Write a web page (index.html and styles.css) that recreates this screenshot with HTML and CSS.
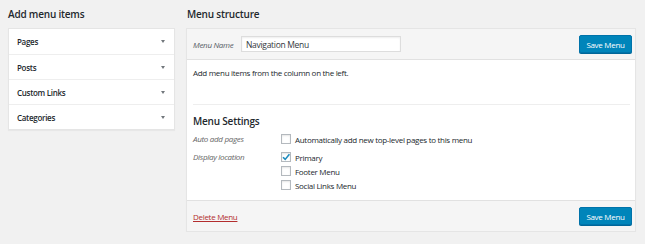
FILE: index.html
```html
<!doctype html>
<html lang="en">
<head>
    <meta charset="utf-8">
    <title>Menus</title>
    <link rel="stylesheet" href="styles.css">
</head>
<body>
    <div class="page">
        <div class="col-left">
            <h2>Add menu items</h2>
            <div class="accordion">
                <div class="acc-item"><span>Pages</span><span class="arrow"></span></div>
                <div class="acc-item"><span>Posts</span><span class="arrow"></span></div>
                <div class="acc-item"><span>Custom Links</span><span class="arrow"></span></div>
                <div class="acc-item"><span>Categories</span><span class="arrow"></span></div>
            </div>
        </div>
        <div class="col-right">
            <h2>Menu structure</h2>
            <div class="menu-box">
                <div class="menu-header">
                    <label class="name-label" for="menu_name">Menu Name</label>
                    <input type="text" id="menu_name" class="name-input" value="Navigation Menu">
                    <button type="button" class="save-button">Save Menu</button>
                </div>
                <div class="menu-body">
                    <p class="hint">Add menu items from the column on the left.</p>
                    <div class="settings">
                        <h3>Menu Settings</h3>
                        <div class="setting-row">
                            <div class="setting-label">Auto add pages</div>
                            <div class="setting-options">
                                <div class="option"><span class="check"></span>Automatically add new top-level pages to this menu</div>
                            </div>
                        </div>
                        <div class="setting-row">
                            <div class="setting-label">Display location</div>
                            <div class="setting-options">
                                <div class="option"><span class="check checked"><svg viewBox="0 0 10 10" width="10" height="10"><path d="M2 5.2 L4.2 7.4 L8.4 2.2" fill="none" stroke="#1e8cbe" stroke-width="1.6"/></svg></span>Primary</div>
                                <div class="option"><span class="check"></span>Footer Menu</div>
                                <div class="option"><span class="check"></span>Social Links Menu</div>
                            </div>
                        </div>
                    </div>
                </div>
                <div class="menu-footer">
                    <a href="#" class="delete-link">Delete Menu</a>
                    <button type="button" class="save-button">Save Menu</button>
                </div>
            </div>
        </div>
    </div>
</body>
</html>
```

FILE: styles.css
```css
body {
    margin: 0;
    background-color: #f1f1f1;
    font-family: "Open Sans", "Noto Sans", sans-serif;
    font-size: 8px;
    letter-spacing: -0.3px;
    color: #23282d;
}
.page {
    display: flex;
    gap: 11px;
    padding: 0 9px 0 8px;
}
.col-left {
    width: 167px;
    flex-shrink: 0;
}
.col-right {
    flex-grow: 1;
}
h2 {
    margin: 0;
    height: 28px;
    line-height: 28px;
    font-size: 10px;
    font-weight: 600;
    letter-spacing: -0.2px;
}
.col-right h2 {
    padding-left: 1px;
}
.accordion {
    background-color: #fff;
    border: 1px solid #e5e5e5;
    box-shadow: 0 1px 1px rgba(0, 0, 0, 0.04);
}
.acc-item {
    height: 25px;
    box-sizing: border-box;
    display: flex;
    align-items: center;
    justify-content: space-between;
    padding: 0 8px 0 8px;
    font-weight: 600;
    border-top: 1px solid #eee;
}
.acc-item:first-child {
    border-top: none;
}
.arrow {
    width: 0;
    height: 0;
    border-left: 2.5px solid transparent;
    border-right: 2.5px solid transparent;
    border-top: 3px solid #72777c;
    margin-right: 1px;
}
.menu-box {
    border: 1px solid #e5e5e5;
    background-color: #fff;
    box-shadow: 0 1px 1px rgba(0, 0, 0, 0.04);
}
.menu-header {
    height: 30px;
    display: flex;
    align-items: center;
    padding: 0 3px 0 6px;
    background-color: #f5f5f5;
    border-bottom: 1px solid #e1e1e1;
}
.name-label {
    font-style: italic;
    color: #555d66;
    width: 41px;
    margin-right: 7px;
}
.name-input {
    width: 160px;
    height: 16px;
    box-sizing: border-box;
    border: 1px solid #ddd;
    box-shadow: inset 0 1px 2px rgba(0, 0, 0, 0.07);
    padding: 0 4px;
    font-family: inherit;
    font-size: 8.5px;
    letter-spacing: -0.3px;
    color: #32373c;
    background-color: #fff;
}
.save-button {
    margin-left: auto;
    width: 53px;
    height: 18px;
    padding: 0;
    background-color: #0085ba;
    border: 1px solid #0073aa;
    border-radius: 2px;
    box-shadow: 0 1px 0 #006799;
    color: #fff;
    font-family: inherit;
    font-size: 8px;
    letter-spacing: -0.3px;
    cursor: pointer;
}
.menu-body {
    padding: 7px 5px 8px 6px;
}
.hint {
    margin: 0;
    line-height: 12px;
}
.settings {
    margin-top: 25px;
    border-top: 1px solid #eee;
    padding-top: 9px;
}
.settings h3 {
    margin: 0 0 4px;
    line-height: 14px;
    font-size: 10px;
    font-weight: 600;
    letter-spacing: -0.2px;
}
.setting-row {
    display: flex;
    margin-bottom: 4px;
}
.setting-row:last-child {
    margin-bottom: 0;
}
.setting-label {
    width: 88px;
    line-height: 14px;
    font-style: italic;
    color: #666;
}
.option {
    display: flex;
    align-items: center;
    height: 14px;
}
.check {
    width: 10px;
    height: 10px;
    box-sizing: border-box;
    border: 1px solid #b4b9be;
    background-color: #fff;
    box-shadow: inset 0 1px 2px rgba(0, 0, 0, 0.1);
    margin-right: 4px;
    position: relative;
}
.check svg {
    position: absolute;
    left: -1px;
    top: -1px;
}
.menu-footer {
    height: 30px;
    display: flex;
    align-items: center;
    padding: 0 3px 0 6px;
    background-color: #f5f5f5;
    border-top: 1px solid #e1e1e1;
}
.delete-link {
    color: #b32d2e;
    text-decoration: underline;
}
```
